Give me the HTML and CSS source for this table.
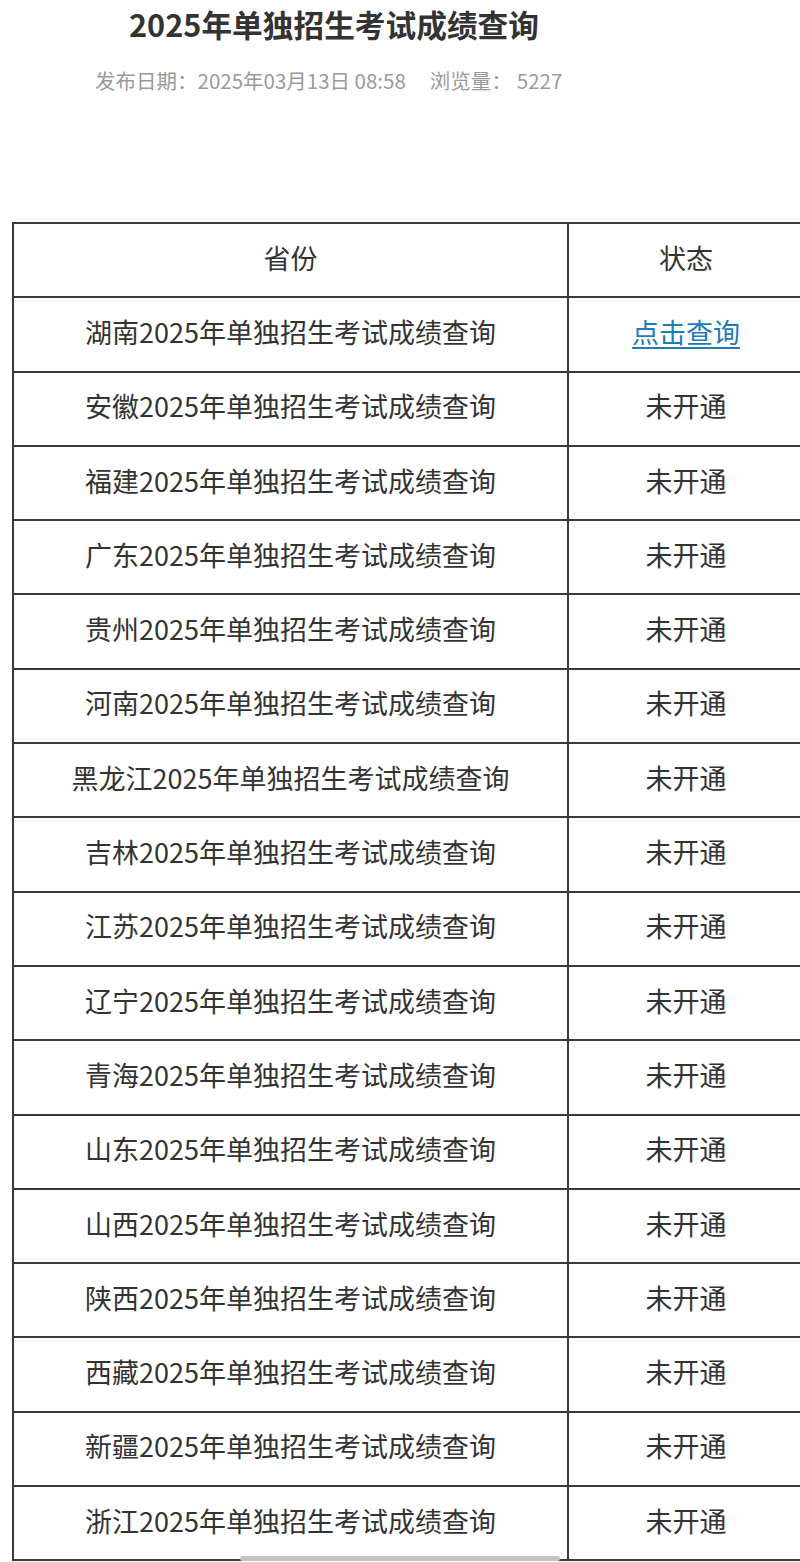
FILE: index.html
```html
<!DOCTYPE html>
<html lang="zh">
<head>
<meta charset="utf-8">
<title>2025年单独招生考试成绩查询</title>
<link rel="stylesheet" href="styles.css">
</head>
<body>
<div class="page">
  <header class="article-head">
    <h1 class="title">2025年单独招生考试成绩查询</h1>
    <div class="meta"><span class="meta-date">发布日期：2025年03月13日 08:58</span><span class="meta-views">浏览量：</span><span class="meta-count">5227</span></div>
  </header>
  <table class="score-table">
    <thead>
      <tr><th class="col-prov">省份</th><th class="col-status">状态</th></tr>
    </thead>
    <tbody>
      <tr><td>湖南2025年单独招生考试成绩查询</td><td><a class="query-link" href="#">点击查询</a></td></tr>
      <tr><td>安徽2025年单独招生考试成绩查询</td><td>未开通</td></tr>
      <tr><td>福建2025年单独招生考试成绩查询</td><td>未开通</td></tr>
      <tr><td>广东2025年单独招生考试成绩查询</td><td>未开通</td></tr>
      <tr><td>贵州2025年单独招生考试成绩查询</td><td>未开通</td></tr>
      <tr><td>河南2025年单独招生考试成绩查询</td><td>未开通</td></tr>
      <tr><td>黑龙江2025年单独招生考试成绩查询</td><td>未开通</td></tr>
      <tr><td>吉林2025年单独招生考试成绩查询</td><td>未开通</td></tr>
      <tr><td>江苏2025年单独招生考试成绩查询</td><td>未开通</td></tr>
      <tr><td>辽宁2025年单独招生考试成绩查询</td><td>未开通</td></tr>
      <tr><td>青海2025年单独招生考试成绩查询</td><td>未开通</td></tr>
      <tr><td>山东2025年单独招生考试成绩查询</td><td>未开通</td></tr>
      <tr><td>山西2025年单独招生考试成绩查询</td><td>未开通</td></tr>
      <tr><td>陕西2025年单独招生考试成绩查询</td><td>未开通</td></tr>
      <tr><td>西藏2025年单独招生考试成绩查询</td><td>未开通</td></tr>
      <tr><td>新疆2025年单独招生考试成绩查询</td><td>未开通</td></tr>
      <tr><td>浙江2025年单独招生考试成绩查询</td><td>未开通</td></tr>
    </tbody>
  </table>
</div>
<div class="scroll-thumb"></div>
</body>
</html>
```

FILE: styles.css
```css
html, body {
  margin: 0;
  padding: 0;
  background: #fff;
  overflow: hidden;
}
body {
  font-family: "Noto Sans CJK SC", "Noto Sans", sans-serif;
  color: #333;
}
.page {
  width: 800px;
}
.article-head {
  height: 222px;
  box-sizing: border-box;
  padding-top: 4px;
}
.title {
  margin: 0;
  padding-left: 129px;
  font-size: 30.7px;
  line-height: 40px;
  font-weight: 700;
  color: #333;
}
.meta {
  margin-top: 22px;
  padding-left: 95px;
  font-size: 20.5px;
  line-height: 28px;
  color: #9a9a9a;
  white-space: nowrap;
}
.meta-views {
  margin-left: 24px;
}
.meta-count {
  margin-left: 5px;
}
.score-table {
  margin-left: 12px;
  width: 793px;
  border-collapse: collapse;
  table-layout: fixed;
}
.score-table th,
.score-table td {
  border: 2px solid #3a3a3a;
  height: 66.3px;
  padding: 0 0 6px;
  text-align: center;
  vertical-align: middle;
  font-size: 27px;
  font-weight: 400;
  color: #333;
  white-space: nowrap;
}
.col-prov {
  width: 553px;
}
.query-link {
  color: #1d7bb8;
  text-decoration: underline;
  text-decoration-thickness: 2px;
  text-underline-offset: 4px;
}
.scroll-thumb {
  position: fixed;
  left: 240px;
  bottom: 1px;
  width: 320px;
  height: 5px;
  border-radius: 3px;
  background: #c4c4c4;
}
```
